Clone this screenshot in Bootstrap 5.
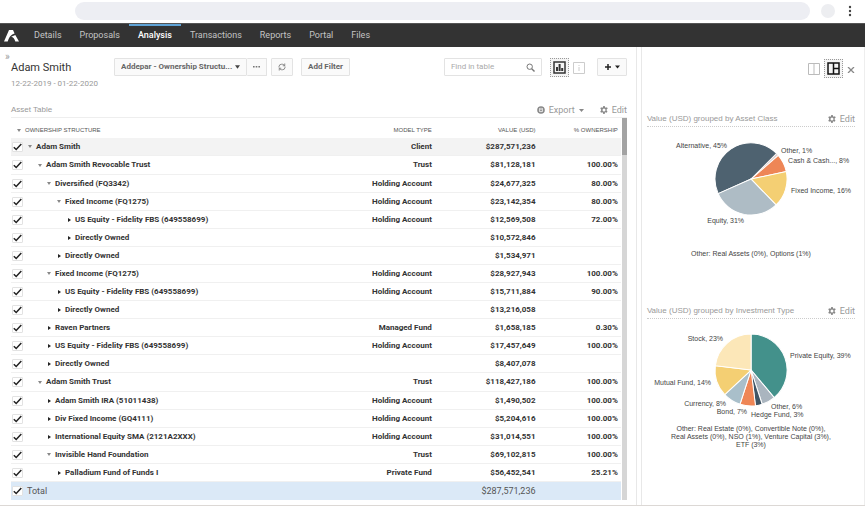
<!DOCTYPE html>
<html lang="en">
<head>
<meta charset="utf-8">
<meta name="viewport" content="width=device-width, initial-scale=1">
<title>Adam Smith – Analysis</title>
<link href="https://cdn.jsdelivr.net/npm/bootstrap@5.3.0/dist/css/bootstrap.min.css" rel="stylesheet">
<style>
body{font-family:Roboto,"Liberation Sans",Arial,sans-serif;font-size:8px;line-height:12px;color:#333;background:#fff;min-height:100vh}
button,input,select{font-family:inherit}
svg{display:block}
.chrome-bar{height:23px;padding:2px 10px 3px 75px}
.address{background:#edeef3;border:0;border-radius:9px;height:18px;min-width:0}
.avatar-dot{width:14px;height:14px;border-radius:50%;background:#edeef1;margin:0 10px 0 11px}
.plain{border:0;background:none;padding:0;color:inherit;line-height:inherit}
.topnav{background:#333;height:24px;border-top:1px solid #555;padding:0 4px}
.topnav .nav{margin-left:5px}
.topnav .nav-link{padding:0 9px;font-size:9px;line-height:19px;color:#c4c4c4;border-top:2px solid transparent;padding-bottom:2px}
.topnav .nav-link.active{color:#fff;font-weight:500;border-top-color:#5fa3d6}
.workspace{border-bottom:1px solid #dcd8d5;min-height:0}
.main-pane{padding:0 9px 5px 11px;min-width:0}
.gutter{width:6px;border:solid #e8e8e8;border-width:0 1px}
.side-pane{width:25.8%;border-right:1px solid #eee;padding:0 9px 0 5px}
.toolbar{height:52px;padding-top:11px}
.expander{position:absolute;left:5px;top:5px;font-size:10px;line-height:9px;color:#999}
.client{width:103px}
.client h1{font-size:11px;line-height:19px;margin:0;font-weight:400}
.client p{font-size:8px;line-height:13px;color:#999;margin:0}
.ctl{height:18px;border:1px solid #e3e3e3;background-color:#fafafa;border-radius:1px;font-size:8px;line-height:16px;font-weight:bold;color:#666;padding:0 6px}
.view-select{width:133px;appearance:none;text-overflow:ellipsis;padding-right:12px;background-image:url("data:image/svg+xml,%3Csvg xmlns='http://www.w3.org/2000/svg' viewBox='0 0 6 4'%3E%3Cpath d='M0 0h6L3 4z' fill='%23444'/%3E%3C/svg%3E");background-repeat:no-repeat;background-position:right 6px center;background-size:5px 4px}
.find-box{width:98px;background:#fff}
.find-box input{border:0;outline:0;width:100%;min-width:0;padding:0;font-size:8px;color:#555}
.find-box input::placeholder{color:#aaa}
.selected-view{border:1px dotted #999;background:#f4f4f4;width:19px;height:19px;padding:2px}
.sect{font-family:"Liberation Sans",Arial,sans-serif;font-size:8px;line-height:12px;color:#999;margin:0;font-weight:normal}
.sect-link{font-size:9px;color:#999;text-decoration:none}
.asset-head{padding:5px 0 1px;border-bottom:1px solid #eee}
.scrollbar-track{width:5px;background:#d6d6d6;margin-left:1px}
.scrollbar-thumb{height:37px;background:#a3a3a3}
.holdings{width:100%;border-collapse:separate;border-spacing:0;table-layout:fixed;font-size:8px;line-height:12px}
.holdings th,.holdings td{padding:0 3px;height:18px;border-bottom:1px solid #f0f0f0;text-align:right;font-weight:bold;white-space:nowrap}
.holdings th:first-child{text-align:left;padding-left:1px}
.holdings thead th{font-family:"Liberation Sans",Arial,sans-serif;font-size:6px;font-weight:normal;color:#555;border:0;padding-top:4px;height:20px}
.holdings thead th:first-child{padding-left:4px}
.holdings .group th,.holdings .group td{height:19px}
.holdings .top-row>*{background:#f3f3f3}
.holdings tfoot>tr>*{background:#dbe9f7;font-weight:normal;font-size:9px;color:#555;border:0}
.col-model{width:20%}.col-value{width:17%}.col-own{width:13.5%}
.tick{appearance:none;width:11px;height:10px;margin:0;flex:none;border:1px solid #e2e2e2;border-radius:1px;background:#fff}
.tick:checked{background:#fff url("data:image/svg+xml,%3Csvg xmlns='http://www.w3.org/2000/svg' viewBox='0 0 9 8'%3E%3Cpath d='M.8 4.200 3.200 6.500 8.300 1' fill='none' stroke='%23222' stroke-width='1.500'/%3E%3C/svg%3E") center/9px 8px no-repeat}
.lvl0{margin-left:3px}.lvl1{margin-left:13px}.lvl2{margin-left:22px}.lvl3{margin-left:32px}.lvl4{margin-left:42px}
.twist{width:8px;height:8px;margin-right:2px;flex:none;border:0;background:none;padding:0;display:flex;align-items:center;justify-content:center}
.twist::before{content:"";border:solid transparent;border-width:2px 0 2px 3px;border-left-color:#222}
.twist[aria-expanded=true]::before{border-width:3px 2px 0 2px;border-color:#888 transparent transparent}
.side-tools{height:66px;padding-top:12px}
.chart-block{margin-bottom:47px}
.chart-head{border-bottom:1px dotted #ccc;padding-bottom:1px}
.pie{width:100%;height:auto}
.pie text{font-family:"Liberation Sans",Arial,sans-serif;font-size:7px;fill:#444}
.pie path{stroke:#fff;stroke-width:1}
.pie-note{font-family:"Liberation Sans",Arial,sans-serif;font-size:7px;line-height:8px;color:#444;margin:0;text-align:center}
</style>
<script src="https://cdn.jsdelivr.net/npm/bootstrap@5.3.0/dist/js/bootstrap.bundle.min.js" defer></script>
</head>
<body class="d-flex flex-column">
<svg width="0" height="0" class="position-absolute" aria-hidden="true">
<symbol id="gear" viewBox="0 0 16 16"><path fill="#888" fill-rule="evenodd" d="M6.5 0h3l.5 2.3 1.7 1 2.2-.8 1.5 2.7L13.200 6.800v2.400l1.700 1.600-1.500 2.700-2.200-.8-1.700 1L9.500 16h-3L6 13.700l-1.700-1-2.200.8L.6 10.800l1.700-1.600V6.800L.6 5.200l1.500-2.700 2.200.8 1.700-1zM8 5a3 3 0 1 0 0 6 3 3 0 0 0 0-6z"/></symbol>
</svg>

<header class="chrome-bar d-flex align-items-center">
  <input class="address flex-grow-1" type="text" aria-label="Address">
  <span class="avatar-dot"></span>
  <button class="plain" aria-label="Browser menu"><svg width="10" height="12" viewBox="0 0 10 12" fill="#444"><circle cx="5" cy="2" r="1.2"/><circle cx="5" cy="6" r="1.2"/><circle cx="5" cy="10" r="1.2"/></svg></button>
</header>

<nav class="topnav d-flex align-items-center" aria-label="Main">
  <a href="#" aria-label="Home"><svg width="16" height="12" viewBox="0 0 16 12" fill="#fff"><path d="M5 0h4l1.600 3.500C7 4.500 5.500 6.500 3.700 11.500H0z"/><path d="M7.200 6.800 11.300 5l3.700 6.500h-3.700C10.600 9 9.300 7.300 7.200 6.800z"/></svg></a>
  <ul class="nav flex-nowrap">
    <li><a class="nav-link" href="#">Details</a></li>
    <li><a class="nav-link" href="#">Proposals</a></li>
    <li><a class="nav-link active" aria-current="page" href="#">Analysis</a></li>
    <li><a class="nav-link" href="#">Transactions</a></li>
    <li><a class="nav-link" href="#">Reports</a></li>
    <li><a class="nav-link" href="#">Portal</a></li>
    <li><a class="nav-link" href="#">Files</a></li>
  </ul>
</nav>

<div class="workspace d-flex flex-grow-1 position-relative">
  <button class="plain expander" aria-label="Expand sidebar">»</button>
  <main class="main-pane flex-grow-1 d-flex flex-column">
    <div class="toolbar d-flex align-items-start">
      <div class="client"><h1>Adam Smith</h1><p>12-22-2019 - 01-22-2020</p></div>
      <select class="ctl view-select" aria-label="View"><option>Addepar - Ownership Structu...</option></select>
      <button class="ctl border-start-0" aria-label="More"><svg width="7" height="2" viewBox="0 0 7 2" fill="#777"><path d="M0 0h1.600v1.500H0zM2.700 0h1.600v1.500H2.700zM5.400 0H7v1.500H5.400z"/></svg></button>
      <button class="ctl ms-1" aria-label="Refresh"><svg width="8" height="8" viewBox="0 0 16 16" fill="none" stroke="#777" stroke-width="1.700"><path d="M2 9V7a5 5 0 0 1 5-4.500h2a5 5 0 0 1 4 2.500M14 7v2a5 5 0 0 1-5 4.500H7A5 5 0 0 1 3 11M13.500 1v4.500H9.500M2.500 15v-4.500h4"/></svg></button>
      <button class="ctl ms-2">Add Filter</button>
      <div class="ctl find-box ms-auto d-flex align-items-center">
        <input type="search" placeholder="Find in table" aria-label="Find in table">
        <svg class="flex-shrink-0" width="9" height="9" viewBox="0 0 9 9" fill="none" stroke="#777"><circle cx="3.700" cy="3.700" r="2.700"/><path d="m5.700 5.700 2.800 2.800" stroke-width="1.400"/></svg>
      </div>
      <button class="plain selected-view ms-2" aria-label="Show charts"><svg class="m-auto" width="13" height="13" viewBox="0 0 13 13"><path d="M1 1h11v11H1z" fill="none" stroke="#333" stroke-width="1.500"/><path d="M3 6h2v4H3zM5.600 3h2v7h-2zM8.200 7h2v3h-2z" fill="#333"/></svg></button>
      <button class="plain ms-1 me-2 pt-1" aria-label="Show details"><svg width="12" height="12" viewBox="0 0 12 12"><path d="M.5.5h11v11H.5z" fill="none" stroke="#ccc"/><path d="M6 3v1M6 5v4" stroke="#ccc"/></svg></button>
      <button class="ctl ms-1" aria-label="Add"><svg width="16" height="8" viewBox="0 0 16 8"><path d="M4 1v6M1 4h6" stroke="#222" stroke-width="1.500"/><path d="M11 2.500h5l-2.500 3z" fill="#222"/></svg></button>
    </div>

    <div class="asset-head d-flex align-items-center">
      <h2 class="sect">Asset Table</h2>
      <a href="#" class="sect-link ms-auto d-flex align-items-center"><svg class="me-1" width="8" height="8" viewBox="0 0 8 8"><circle cx="4" cy="4" r="3" fill="none" stroke="#888" stroke-width="1.600"/><path d="M4 1.500V5M2.300 3.600 4 5.300l1.700-1.700" fill="none" stroke="#888"/></svg>Export<svg class="ms-1" width="5" height="3" viewBox="0 0 5 3"><path d="M0 0h5L2.500 3z" fill="#888"/></svg></a>
      <a href="#" class="sect-link d-flex align-items-center ms-3"><svg class="me-1" width="8" height="8"><use href="#gear"/></svg>Edit</a>
    </div>

    <div class="d-flex flex-grow-1">
      <div class="flex-grow-1">
      <table class="holdings">
        <colgroup><col><col class="col-model"><col class="col-value"><col class="col-own"></colgroup>
        <thead><tr><th><div class="d-flex align-items-center"><button class="twist" aria-expanded="true" aria-label="Collapse all"></button>OWNERSHIP STRUCTURE</div></th><th>MODEL TYPE</th><th>VALUE (USD)</th><th>% OWNERSHIP</th></tr></thead>
        <tbody>
        <tr class="top-row"><th><div class="d-flex align-items-center"><input class="tick" type="checkbox" checked aria-label="Adam Smith"><button class="twist lvl0" aria-expanded="true" aria-label="Toggle"></button>Adam Smith</div></th><td>Client</td><td>$287,571,236</td><td></td></tr>
        <tr class="group"><th><div class="d-flex align-items-center"><input class="tick" type="checkbox" checked aria-label="Adam Smith Revocable Trust"><button class="twist lvl1" aria-expanded="true" aria-label="Toggle"></button>Adam Smith Revocable Trust</div></th><td>Trust</td><td>$81,128,181</td><td>100.00%</td></tr>
        <tr><th><div class="d-flex align-items-center"><input class="tick" type="checkbox" checked aria-label="Diversified"><button class="twist lvl2" aria-expanded="true" aria-label="Toggle"></button>Diversified (FQ3342)</div></th><td>Holding Account</td><td>$24,677,325</td><td>80.00%</td></tr>
        <tr><th><div class="d-flex align-items-center"><input class="tick" type="checkbox" checked aria-label="Fixed Income"><button class="twist lvl3" aria-expanded="true" aria-label="Toggle"></button>Fixed Income (FQ1275)</div></th><td>Holding Account</td><td>$23,142,354</td><td>80.00%</td></tr>
        <tr><th><div class="d-flex align-items-center"><input class="tick" type="checkbox" checked aria-label="US Equity"><button class="twist lvl4" aria-expanded="false" aria-label="Toggle"></button>US Equity - Fidelity FBS (649558699)</div></th><td>Holding Account</td><td>$12,569,508</td><td>72.00%</td></tr>
        <tr><th><div class="d-flex align-items-center"><input class="tick" type="checkbox" checked aria-label="Directly Owned"><button class="twist lvl4" aria-expanded="false" aria-label="Toggle"></button>Directly Owned</div></th><td></td><td>$10,572,846</td><td></td></tr>
        <tr><th><div class="d-flex align-items-center"><input class="tick" type="checkbox" checked aria-label="Directly Owned"><button class="twist lvl3" aria-expanded="false" aria-label="Toggle"></button>Directly Owned</div></th><td></td><td>$1,534,971</td><td></td></tr>
        <tr><th><div class="d-flex align-items-center"><input class="tick" type="checkbox" checked aria-label="Fixed Income"><button class="twist lvl2" aria-expanded="true" aria-label="Toggle"></button>Fixed Income (FQ1275)</div></th><td>Holding Account</td><td>$28,927,943</td><td>100.00%</td></tr>
        <tr><th><div class="d-flex align-items-center"><input class="tick" type="checkbox" checked aria-label="US Equity"><button class="twist lvl3" aria-expanded="false" aria-label="Toggle"></button>US Equity - Fidelity FBS (649558699)</div></th><td>Holding Account</td><td>$15,711,884</td><td>90.00%</td></tr>
        <tr><th><div class="d-flex align-items-center"><input class="tick" type="checkbox" checked aria-label="Directly Owned"><button class="twist lvl3" aria-expanded="false" aria-label="Toggle"></button>Directly Owned</div></th><td></td><td>$13,216,058</td><td></td></tr>
        <tr><th><div class="d-flex align-items-center"><input class="tick" type="checkbox" checked aria-label="Raven Partners"><button class="twist lvl2" aria-expanded="false" aria-label="Toggle"></button>Raven Partners</div></th><td>Managed Fund</td><td>$1,658,185</td><td>0.30%</td></tr>
        <tr><th><div class="d-flex align-items-center"><input class="tick" type="checkbox" checked aria-label="US Equity"><button class="twist lvl2" aria-expanded="false" aria-label="Toggle"></button>US Equity - Fidelity FBS (649558699)</div></th><td>Holding Account</td><td>$17,457,649</td><td>100.00%</td></tr>
        <tr><th><div class="d-flex align-items-center"><input class="tick" type="checkbox" checked aria-label="Directly Owned"><button class="twist lvl2" aria-expanded="false" aria-label="Toggle"></button>Directly Owned</div></th><td></td><td>$8,407,078</td><td></td></tr>
        <tr class="group"><th><div class="d-flex align-items-center"><input class="tick" type="checkbox" checked aria-label="Adam Smith Trust"><button class="twist lvl1" aria-expanded="true" aria-label="Toggle"></button>Adam Smith Trust</div></th><td>Trust</td><td>$118,427,186</td><td>100.00%</td></tr>
        <tr><th><div class="d-flex align-items-center"><input class="tick" type="checkbox" checked aria-label="Adam Smith IRA"><button class="twist lvl2" aria-expanded="false" aria-label="Toggle"></button>Adam Smith IRA (51011438)</div></th><td>Holding Account</td><td>$1,490,502</td><td>100.00%</td></tr>
        <tr><th><div class="d-flex align-items-center"><input class="tick" type="checkbox" checked aria-label="Div Fixed Income"><button class="twist lvl2" aria-expanded="false" aria-label="Toggle"></button>Div Fixed Income (GQ4111)</div></th><td>Holding Account</td><td>$5,204,616</td><td>100.00%</td></tr>
        <tr><th><div class="d-flex align-items-center"><input class="tick" type="checkbox" checked aria-label="International Equity SMA"><button class="twist lvl2" aria-expanded="false" aria-label="Toggle"></button>International Equity SMA (2121A2XXX)</div></th><td>Holding Account</td><td>$31,014,551</td><td>100.00%</td></tr>
        <tr><th><div class="d-flex align-items-center"><input class="tick" type="checkbox" checked aria-label="Invisible Hand Foundation"><button class="twist lvl2" aria-expanded="true" aria-label="Toggle"></button>Invisible Hand Foundation</div></th><td>Trust</td><td>$69,102,815</td><td>100.00%</td></tr>
        <tr><th><div class="d-flex align-items-center"><input class="tick" type="checkbox" checked aria-label="Palladium Fund of Funds I"><button class="twist lvl3" aria-expanded="false" aria-label="Toggle"></button>Palladium Fund of Funds I</div></th><td>Private Fund</td><td>$56,452,541</td><td>25.21%</td></tr>
        </tbody>
        <tfoot><tr><th><label class="d-flex align-items-center"><input class="tick me-1" type="checkbox" checked>Total</label></th><td></td><td>$287,571,236</td><td></td></tr></tfoot>
      </table>
      </div>
      <div class="scrollbar-track flex-shrink-0"><div class="scrollbar-thumb"></div></div>
    </div>
  </main>
  <div class="gutter flex-shrink-0"></div>
  <aside class="side-pane flex-shrink-0">
    <div class="side-tools d-flex justify-content-end align-items-start">
      <button class="plain pt-1 me-1" aria-label="Two columns"><svg width="12" height="12" viewBox="0 0 12 12"><path d="M.5.5h11v11H.5zM6 0v12" fill="none" stroke="#bbb"/></svg></button>
      <button class="plain selected-view" aria-label="Split layout"><svg class="m-auto" width="13" height="13" viewBox="0 0 13 13"><path d="M1 1h11v11H1zM6.500 1v11M6.500 6.500H12" fill="none" stroke="#111" stroke-width="1.500"/></svg></button>
      <button class="plain ms-1 pt-2" aria-label="Close panel"><svg width="8" height="6" viewBox="0 0 8 6"><path d="m1 0 6 6m0-6-6 6" stroke="#888" stroke-width="1.300"/></svg></button>
    </div>

    <section class="chart-block">
      <div class="chart-head d-flex align-items-center justify-content-between"><h2 class="sect">Value (USD) grouped by Asset Class</h2><a href="#" class="sect-link d-flex align-items-center"><svg class="me-1" width="8" height="8"><use href="#gear"/></svg>Edit</a></div>
      <svg class="pie" viewBox="0 0 208 123" role="img" aria-label="Value by asset class">
        <g transform="translate(104 52)">
          <path fill="#4e6270" d="M0 0-32.900 14.600A36 36 0 0 1 25.500-25.500z"/>
          <path fill="#ddd3d3" stroke-opacity=".5" d="M0 0 25.500-25.500A36 36 0 0 1 27.200-23.600z"/>
          <path fill="#ee8656" d="M0 0 27.200-23.600A36 36 0 0 1 35.200-7.500z"/>
          <path fill="#f4cf73" d="M0 0 35.200-7.500A36 36 0 0 1 25 25.900z"/>
          <path fill="#aebcc5" d="M0 0 25 25.900A36 36 0 0 1-32.900 14.600z"/>
        </g>
        <text x="80" y="21" text-anchor="end">Alternative, 45%</text>
        <text x="134" y="26">Other, 1%</text>
        <text x="141" y="36">Cash &amp; Cash..., 8%</text>
        <text x="144" y="66">Fixed Income, 16%</text>
        <text x="97" y="96" text-anchor="end">Equity, 31%</text>
      </svg>
      <p class="pie-note">Other: Real Assets (0%), Options (1%)</p>
    </section>

    <section>
      <div class="chart-head d-flex align-items-center justify-content-between"><h2 class="sect">Value (USD) grouped by Investment Type</h2><a href="#" class="sect-link d-flex align-items-center"><svg class="me-1" width="8" height="8"><use href="#gear"/></svg>Edit</a></div>
      <svg class="pie" viewBox="0 0 208 106" role="img" aria-label="Value by investment type">
        <g transform="translate(104 51)">
          <path fill="#43918b" d="M0 0V-36A36 36 0 0 1 23.100 27.600z"/>
          <path fill="#aab5bf" d="M0 0 23.100 27.600A36 36 0 0 1 11.100 34.200z"/>
          <path fill="#3f5566" d="M0 0 11.100 34.200A36 36 0 0 1 4.400 35.700z"/>
          <path fill="#ee8656" d="M0 0 4.400 35.700A36 36 0 0 1-11.100 34.200z"/>
          <path fill="#a9bfca" d="M0 0-11.100 34.200A36 36 0 0 1-26.300 24.600z"/>
          <path fill="#f4cf73" d="M0 0-26.300 24.600A36 36 0 0 1-35.700-4.400z"/>
          <path fill="#fce7b8" d="M0 0-35.700-4.400A36 36 0 0 1 0-36z"/>
        </g>
        <text x="76" y="22" text-anchor="end">Stock, 23%</text>
        <text x="143" y="39">Private Equity, 39%</text>
        <text x="64" y="66" text-anchor="end">Mutual Fund, 14%</text>
        <text x="79" y="87" text-anchor="end">Currency, 8%</text>
        <text x="100" y="95" text-anchor="end">Bond, 7%</text>
        <text x="124" y="90">Other, 6%</text>
        <text x="104" y="98">Hedge Fund, 3%</text>
      </svg>
      <p class="pie-note">Other: Real Estate (0%), Convertible Note (0%),<br>Real Assets (0%), NSO (1%), Venture Capital (3%),<br>ETF (3%)</p>
    </section>
  </aside>
</div>
</body>
</html>
